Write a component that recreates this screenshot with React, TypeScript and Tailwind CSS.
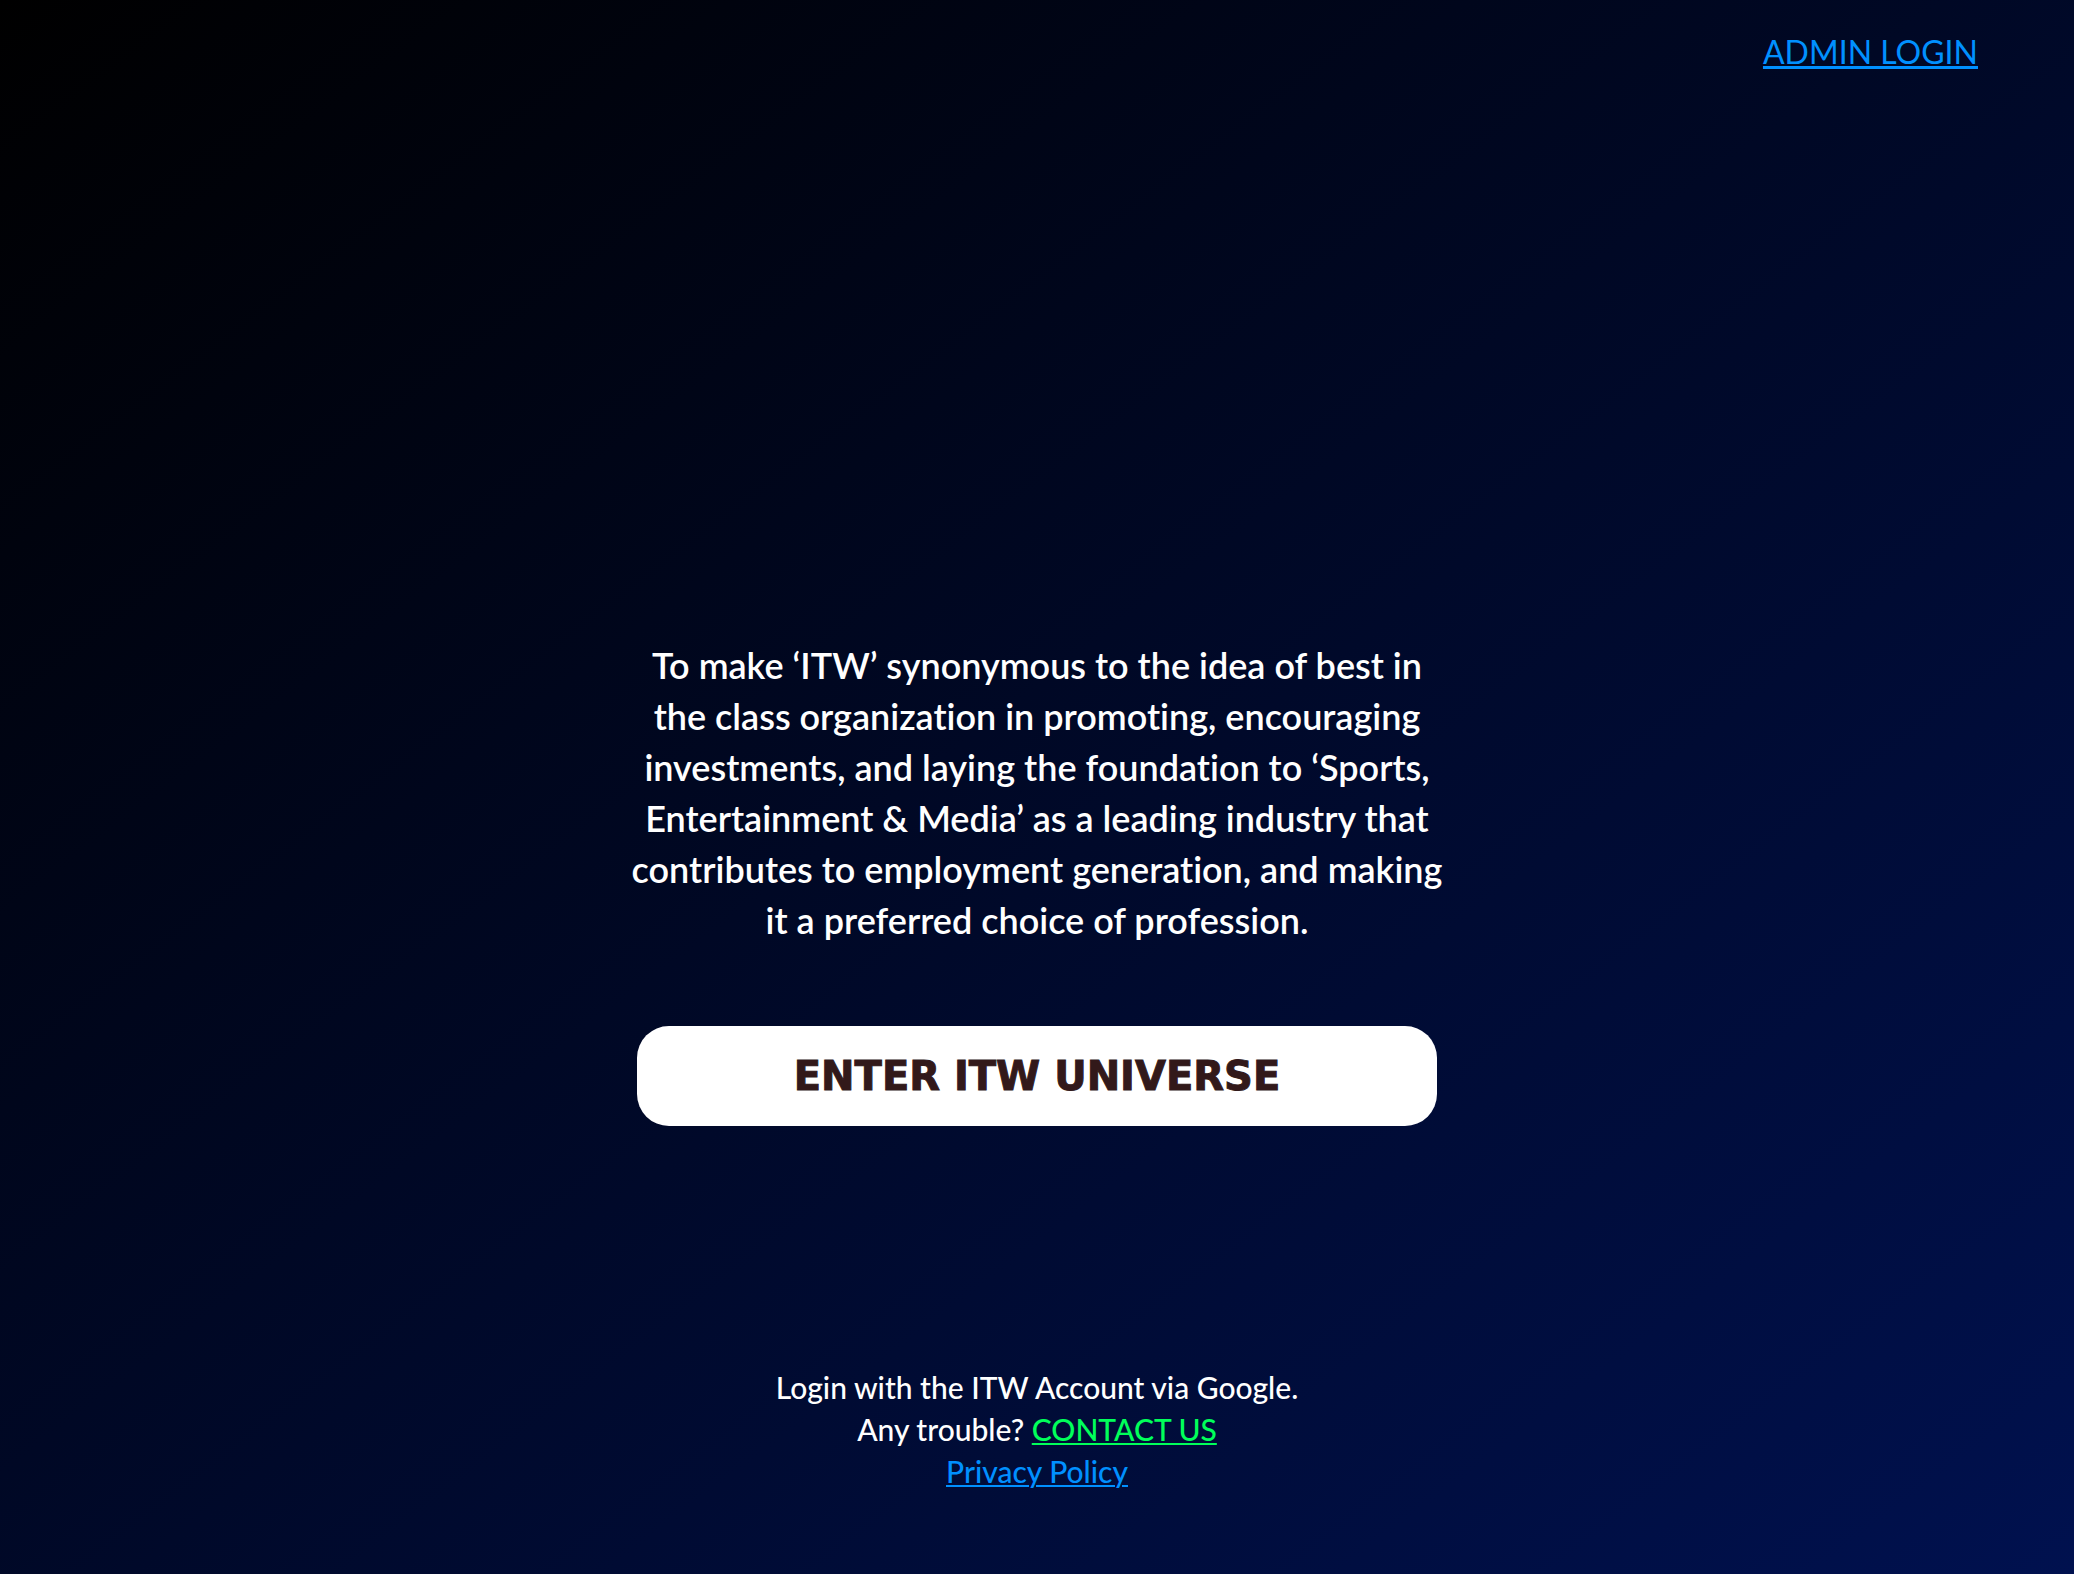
export default function App() {
  return (
    <div className="flex min-h-screen flex-col bg-linear-to-br/srgb from-black to-[#00114f] font-['Lato',sans-serif] text-white [font-variant-ligatures:none]">
      <header className="flex justify-end px-24 pt-7">
        <a
          href="#admin"
          className="text-[32px] leading-12 text-[#0090ff] underline decoration-[3px] underline-offset-2"
        >
          ADMIN LOGIN
        </a>
      </header>

      <main className="flex flex-1 flex-col items-center justify-end px-6 pt-16">
        <p className="max-w-[840px] text-center text-[36px] leading-[51px] font-semibold">
          To make ‘ITW’ synonymous to the idea of best in{" "}
          <br className="max-md:hidden" />
          the class organization in promoting, encouraging{" "}
          <br className="max-md:hidden" />
          investments, and laying the foundation to ‘Sports,{" "}
          <br className="max-md:hidden" />
          Entertainment &amp; Media’ as a leading industry that{" "}
          <br className="max-md:hidden" />
          contributes to employment generation, and making{" "}
          <br className="max-md:hidden" />
          it a preferred choice of profession.
        </p>
        <button
          type="button"
          className="mt-20 w-full max-w-[800px] cursor-pointer rounded-[32px] bg-white px-6 py-5 font-['DejaVu_Sans',sans-serif] text-[40px] leading-15 font-bold text-[#32191a] [-webkit-text-stroke:1px_#32191a]"
        >
          ENTER ITW UNIVERSE
        </button>
      </main>

      <footer className="mt-60 px-6 pb-[82px] text-center text-[30px] leading-[42px] font-medium">
        <p>Login with the ITW Account via Google.</p>
        <p>
          Any trouble?{" "}
          <a href="#contact" className="text-[#00ff5a] underline decoration-2 underline-offset-2">
            CONTACT US
          </a>
        </p>
        <p>
          <a href="#privacy" className="text-[#0090ff] underline decoration-2 underline-offset-2">
            Privacy Policy
          </a>
        </p>
      </footer>
    </div>
  );
}
